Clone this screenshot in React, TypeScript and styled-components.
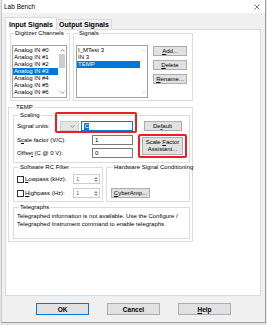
import React from 'react';
import styled, { createGlobalStyle } from 'styled-components';

const GlobalStyle = createGlobalStyle`
  html, body {
    margin: 0;
    padding: 0;
  }
  body {
    width: 267px;
    height: 325px;
    overflow: hidden;
    background: #e6e6e6;
    font-family: "Liberation Sans", Arial, sans-serif;
    color: #000;
  }
`;

const Window = styled.div`
  box-sizing: border-box;
  width: 265px;
  height: 323px;
  margin-left: 1px;
  background: #f0f0f0;
  border-left: 1px solid #c4c4c4;
  border-right: 1px solid #9d9d9d;
  border-bottom: 1px solid #9d9d9d;
`;

const TitleBar = styled.div`
  height: 13px;
  background: #fff;
  display: flex;
  align-items: center;
  justify-content: space-between;
  padding: 0 5px 0 2px;
  font-size: 6.5px;
`;

const Body = styled.div`
  padding: 4px 3px 0 3px;
`;

const TabStrip = styled.div`
  display: flex;
  align-items: flex-end;
  height: 12px;
  position: relative;
  z-index: 1;
`;

const Tab = styled.div<{ $active?: boolean }>`
  box-sizing: border-box;
  display: flex;
  align-items: center;
  justify-content: center;
  width: ${p => (p.$active ? 52 : 55)}px;
  height: ${p => (p.$active ? 13 : 10)}px;
  margin-bottom: ${p => (p.$active ? -1 : 0)}px;
  background: ${p => (p.$active ? '#fff' : '#f0f0f0')};
  border: 1px solid #d9d9d9;
  border-bottom: none;
  ${p => (p.$active ? '' : 'border-left: none;')}
  font-size: 7px;
  font-weight: bold;
`;

const Panel = styled.div`
  box-sizing: border-box;
  width: 256px;
  height: 267px;
  background: #fff;
  border: 1px solid #d9d9d9;
  padding-left: 2px;
  font-size: 6px;
`;

const Row = styled.div<{ $gap?: number; $ml?: number; $mt?: number }>`
  display: flex;
  gap: ${p => p.$gap ?? 0}px;
  margin-left: ${p => p.$ml ?? 0}px;
  margin-top: ${p => p.$mt ?? 0}px;
`;

const Group = styled.fieldset<{ $w: number; $h: number; $pad: string; $mt?: number }>`
  box-sizing: border-box;
  width: ${p => p.$w}px;
  height: ${p => p.$h}px;
  margin: ${p => p.$mt ?? 0}px 0 0 0;
  min-width: 0;
  padding: ${p => p.$pad};
  border: 1px solid #dcdcdc;
  position: relative;
  font-size: 6px;
  line-height: 7px;
`;

const Legend = styled.legend`
  font-size: 6px;
  line-height: 7px;
  padding: 0 1px;
  margin-left: 2px;
  white-space: nowrap;
`;

const ListBox = styled.div<{ $w: number }>`
  box-sizing: border-box;
  width: ${p => p.$w}px;
  height: 53px;
  border: 1px solid #a0a0a0;
  display: flex;
  overflow: hidden;
  background: #fff;
`;

const Items = styled.div`
  flex: 1;
  padding-top: 1px;
`;

const Item = styled.div<{ $sel?: boolean }>`
  height: 7px;
  line-height: 7px;
  font-size: 6px;
  white-space: nowrap;
  padding-left: 1px;
  background: ${p => (p.$sel ? '#0078d7' : 'transparent')};
  color: ${p => (p.$sel ? '#fff' : '#000')};
`;

const ScrollBar = styled.div<{ $w: number }>`
  width: ${p => p.$w}px;
  display: flex;
  flex-direction: column;
  align-items: center;
  justify-content: space-between;
  padding: 3px 0;
  background: #fff;
`;

const Thumb = styled.div`
  width: 6px;
  height: 14px;
  background: #cdcdcd;
  margin-top: 2px;
  margin-bottom: auto;
`;

const ButtonColumn = styled.div`
  display: flex;
  flex-direction: column;
  gap: 4px;
  margin-top: 1px;
`;

const Button = styled.button<{ $w: number; $h?: number; $default?: boolean; $bold?: boolean }>`
  display: block;
  box-sizing: border-box;
  width: ${p => p.$w}px;
  height: ${p => p.$h ?? 10}px;
  padding: 0;
  margin: 0;
  background: #e1e1e1;
  border: 1px solid ${p => (p.$default ? '#0078d7' : '#adadad')};
  font-family: "Liberation Sans", Arial, sans-serif;
  font-size: ${p => (p.$bold ? 6.5 : 6)}px;
  font-weight: ${p => (p.$bold ? 'bold' : 'normal')};
  line-height: 7px;
  text-align: center;
  white-space: nowrap;
  color: #000;
  u {
    text-decoration-thickness: 0.5px;
    text-underline-offset: 1px;
  }
`;

const Column = styled.div<{ $gap?: number; $ml?: number; $center?: boolean }>`
  display: flex;
  flex-direction: column;
  align-items: ${p => (p.$center ? 'center' : 'stretch')};
  gap: ${p => p.$gap ?? 0}px;
  margin-left: ${p => p.$ml ?? 0}px;
`;

const FieldRow = styled.div<{ $mt?: number }>`
  display: flex;
  align-items: center;
  height: 10px;
  margin-top: ${p => p.$mt ?? 0}px;
`;

const Label = styled.span<{ $w: number }>`
  width: ${p => p.$w}px;
  font-size: 6px;
  white-space: nowrap;
  u {
    text-decoration-thickness: 0.5px;
  }
`;

const Highlight = styled.div<{ $t: number; $r: number; $b: number; $l: number; $mt?: number }>`
  position: relative;
  display: flex;
  gap: 2px;
  margin-top: ${p => p.$mt ?? 0}px;
  &::after {
    content: '';
    position: absolute;
    top: -${p => p.$t}px;
    right: -${p => p.$r}px;
    bottom: -${p => p.$b}px;
    left: -${p => p.$l}px;
    border: 2.5px solid #ee1c24;
    border-radius: 2px;
    pointer-events: none;
  }
`;

const Combo = styled.div`
  box-sizing: border-box;
  width: 19px;
  height: 10px;
  background: #e5e5e5;
  border: 1px solid #cccccc;
  display: flex;
  align-items: center;
  justify-content: flex-end;
  padding-right: 3px;
`;

const TextBox = styled.div<{ $w: number; $focus?: boolean; $disabled?: boolean }>`
  box-sizing: border-box;
  width: ${p => p.$w}px;
  height: 10px;
  border: 1px solid ${p => (p.$focus ? '#0078d7' : p.$disabled ? '#cccccc' : '#7a7a7a')};
  background: #fff;
  display: flex;
  align-items: center;
  padding-left: 2px;
  font-size: 6px;
  color: ${p => (p.$disabled ? '#6d6d6d' : '#000')};
`;

const Selected = styled.span`
  background: #0078d7;
  color: #fff;
  padding: 0 0.5px;
  line-height: 7px;
`;

const Spinner = styled.div`
  margin-left: auto;
  margin-right: 1px;
  display: flex;
  flex-direction: column;
  gap: 1px;
`;

const CheckBox = styled.div`
  box-sizing: border-box;
  width: 7px;
  height: 7px;
  border: 1px solid #333;
  background: #fff;
  margin-right: 1px;
`;

const Note = styled.div`
  font-size: 6px;
  line-height: 8px;
  white-space: nowrap;
`;

const Footer = styled.div`
  display: flex;
  gap: 18px;
  margin: 7px 0 0 31px;
`;

const Chevron = ({ up, color = '#606060' }: { up?: boolean; color?: string }) => (
  <svg width="5" height="3" viewBox="0 0 5 3">
    <path d={up ? 'M0.5 2.6 L2.5 0.6 L4.5 2.6' : 'M0.5 0.4 L2.5 2.4 L4.5 0.4'} fill="none" stroke={color} strokeWidth="0.7" />
  </svg>
);

const Triangle = ({ up }: { up?: boolean }) => (
  <svg width="4" height="2" viewBox="0 0 4 2">
    <path d={up ? 'M0 2 L2 0 L4 2 Z' : 'M0 0 L2 2 L4 0 Z'} fill="#8a8a8a" />
  </svg>
);

const channels = ['Analog IN #0', 'Analog IN #1', 'Analog IN #2', 'Analog IN #3', 'Analog IN #4', 'Analog IN #5', 'Analog IN #6', 'Analog IN #7'];
const signals = ['I_MTest 3', 'IN 3', 'TEMP'];

export default function App() {
  return (
    <>
      <GlobalStyle />
      <Window>
        <TitleBar>
          <span>Lab Bench</span>
          <svg width="6" height="6" viewBox="0 0 6 6">
            <path d="M0.5 0.5 L5.5 5.5 M5.5 0.5 L0.5 5.5" stroke="#222" strokeWidth="0.6" />
          </svg>
        </TitleBar>
        <Body>
          <TabStrip>
            <Tab $active>Input Signals</Tab>
            <Tab>Output Signals</Tab>
          </TabStrip>
          <Panel>
            <Row $gap={3} $ml={2}>
              <Group $w={60} $h={71} $pad="8px 0 0 1px">
                <Legend>Digitizer Channels</Legend>
                <ListBox $w={55}>
                  <Items>
                    {channels.map(c => (
                      <Item key={c} $sel={c === 'Analog IN #3'}>{c}</Item>
                    ))}
                  </Items>
                  <ScrollBar $w={8}>
                    <Chevron up />
                    <Thumb />
                    <Chevron />
                  </ScrollBar>
                </ListBox>
              </Group>
              <Group $w={120} $h={71} $pad="8px 4px 0 2px">
                <Legend>Signals</Legend>
                <Row $gap={5}>
                  <ListBox $w={72}>
                    <Items>
                      {signals.map(s => (
                        <Item key={s} $sel={s === 'TEMP'}>{s}</Item>
                      ))}
                    </Items>
                    <ScrollBar $w={7}>
                      <Chevron up color="#c8c8c8" />
                      <Chevron color="#c8c8c8" />
                    </ScrollBar>
                  </ListBox>
                  <ButtonColumn>
                    <Button $w={34}><u>A</u>dd...</Button>
                    <Button $w={34}><u>D</u>elete</Button>
                    <Button $w={34}><u>R</u>ename...</Button>
                  </ButtonColumn>
                </Row>
              </Group>
            </Row>

            <Group $w={185} $h={138} $pad="1px 2px 0 4px" $mt={3}>
              <Legend>TEMP</Legend>
              <Group $w={177} $h={51} $pad="2px 0 0 3px">
                <Legend>Scaling</Legend>
                <Row>
                  <Column>
                    <FieldRow>
                      <Label $w={43}>Signal units:</Label>
                      <Highlight $t={9} $r={4} $b={2} $l={5}>
                        <Combo>
                          <Chevron />
                        </Combo>
                        <TextBox $w={52} $focus>
                          <Selected>C</Selected>
                        </TextBox>
                      </Highlight>
                    </FieldRow>
                    <FieldRow $mt={4}>
                      <Label $w={75}>S<u>c</u>ale factor (V/C):</Label>
                      <TextBox $w={41}>1</TextBox>
                    </FieldRow>
                    <FieldRow $mt={3}>
                      <Label $w={75}>Offse<u>t</u> (C @ 0 V):</Label>
                      <TextBox $w={41}>0</TextBox>
                    </FieldRow>
                  </Column>
                  <Column $ml={9} $center>
                    <Button $w={38}>De<u>f</u>ault</Button>
                    <Highlight $t={3} $r={4} $b={3} $l={4} $mt={6}>
                      <Button $w={41} $h={18}>
                        Scale <u>F</u>actor
                        <br />
                        Assistant...
                      </Button>
                    </Highlight>
                  </Column>
                </Row>
              </Group>

              <Row $gap={3} $mt={1}>
                <Group $w={90} $h={38} $pad="3px 0 0 3px">
                  <Legend>Software RC Filter</Legend>
                  <FieldRow>
                    <CheckBox />
                    <Label $w={48}><u>L</u>owpass (kHz):</Label>
                    <TextBox $w={27} $disabled>
                      1
                      <Spinner>
                        <Triangle up />
                        <Triangle />
                      </Spinner>
                    </TextBox>
                  </FieldRow>
                  <FieldRow $mt={4}>
                    <CheckBox />
                    <Label $w={48}><u>H</u>ighpass (Hz):</Label>
                    <TextBox $w={27} $disabled>
                      1
                      <Spinner>
                        <Triangle up />
                        <Triangle />
                      </Spinner>
                    </TextBox>
                  </FieldRow>
                </Group>
                <Group $w={84} $h={38} $pad="17px 0 0 4px">
                  <Legend>Hardware Signal Conditioning</Legend>
                  <Button $w={39}><u>C</u>yberAmp...</Button>
                </Group>
              </Row>

              <Group $w={177} $h={35} $pad="1px 0 0 3px" $mt={2}>
                <Legend>Telegraphs</Legend>
                <Note>Telegraphed information is not available. Use the Configure /</Note>
                <Note>Telegraphed Instrument command to enable telegraphs.</Note>
              </Group>
            </Group>
          </Panel>
          <Footer>
            <Button $w={53} $h={12} $default $bold>OK</Button>
            <Button $w={53} $h={12} $bold>Cancel</Button>
            <Button $w={53} $h={12} $bold><u>H</u>elp</Button>
          </Footer>
        </Body>
      </Window>
    </>
  );
}
